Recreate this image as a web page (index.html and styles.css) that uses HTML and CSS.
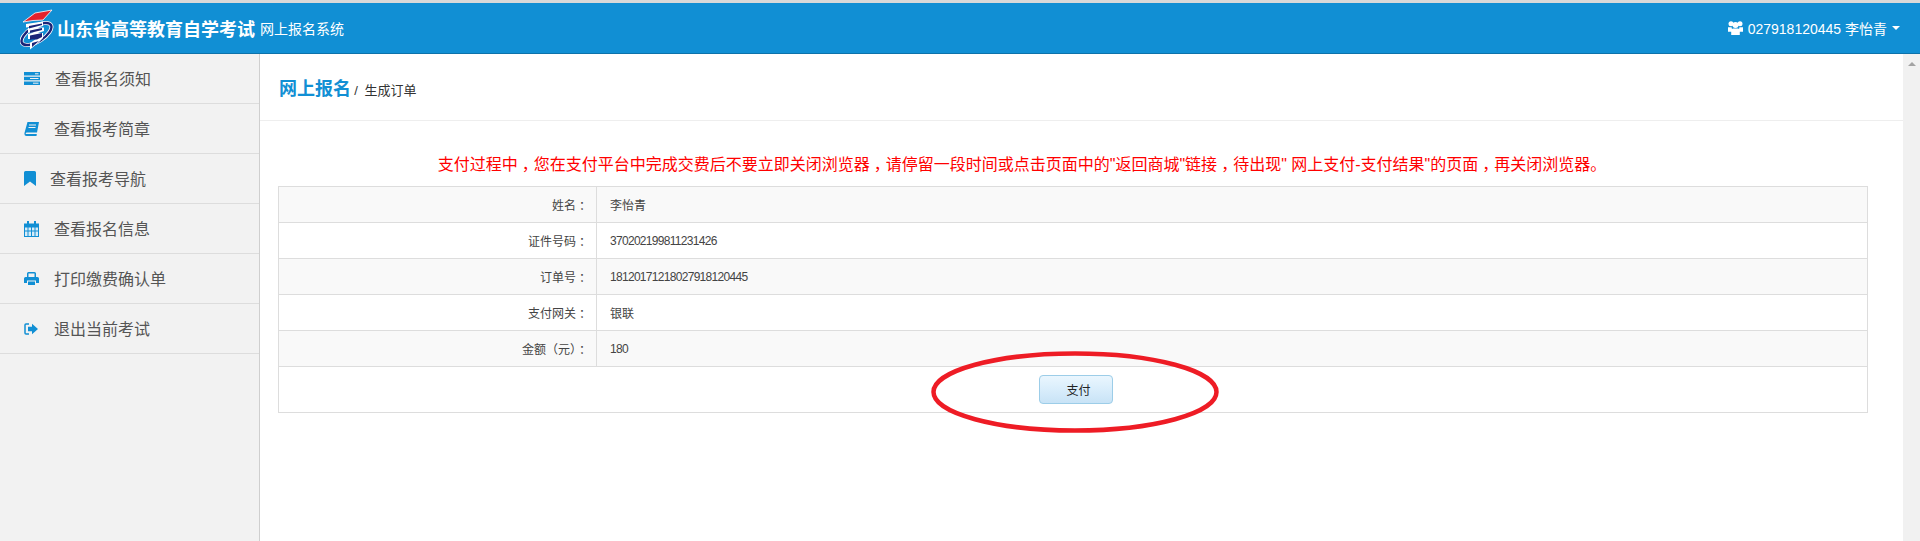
FILE: index.html
```html
<!DOCTYPE html>
<html lang="zh">
<head>
<meta charset="utf-8">
<title>网上报名</title>
<link rel="stylesheet" href="styles.css">
</head>
<body>
<div class="topline"></div>
<header class="header">
  <div class="brand">
    <svg class="logo" viewBox="20 8 34 42" width="34" height="42">
      <path d="M23 21 L35 12 L52 9 L43 19 L33 19.500 Z" fill="#e2202c" stroke="#fff" stroke-width=".8"/>
      <ellipse cx="36.500" cy="33" rx="17" ry="7.500" transform="rotate(-32 36.500 33)" fill="none" stroke="#fff" stroke-width="4"/>
      <ellipse cx="36.500" cy="33" rx="17" ry="7.500" transform="rotate(-32 36.500 33)" fill="none" stroke="#1b2478" stroke-width="2.400"/>
      <path d="M26 23 L43 20.500 V25 L38 26.500 H44 V30 L38 32 H43 V37 L38 42 L30 48.500 V42 L36 38 H28 V33 L34 31.500 H28 V27 L33 25.500 L26 26.500 Z" fill="#fff"/>
      <path d="M29 25 L42 22.500 V24 L29 27.500 Z M30 29.500 L42 27 V29 L30 32 Z M30 34.500 L42 32 V36 L37 38.500 H32 L30 39 Z M32 42 L39 40 L32 46 Z" fill="#1b2478"/>
    </svg>
    <span class="brand-title">山东省高等教育自学考试</span>
    <span class="brand-sub">网上报名系统</span>
  </div>
  <div class="user">
    <svg class="user-icon" viewBox="0 0 15 14" width="15" height="14"><circle cx="3" cy="2.800" r="2.500" fill="#fff"/><circle cx="12" cy="2.800" r="2.500" fill="#fff"/><circle cx="7.500" cy="4" r="3" fill="#fff"/><path d="M0 6.200h3.600l.9 4.600H0zM15 6.200h-3.600l-.9 4.600H15z" fill="#fff"/><path d="M3.200 14V9.600Q3.200 7.600 5.200 7.600h4.600q2 0 2 2V14z" fill="#fff"/></svg>
    <span class="user-text">027918120445 李怡青</span>
    <span class="caret"></span>
  </div>
</header>
<div class="body">
  <aside class="sidebar">
    <a class="nav-item">
      <svg class="nav-icon" viewBox="0 0 16 13" width="16" height="13"><path d="M0 0h16v3.600H0zM0 4.700h16v3.600H0zM0 9.400h16V13H0z" fill="#118fd4"/><path d="M11 1.800h3.500M6 6.500h8.500M9 11.200h5.500" stroke="#f2f2f2" stroke-width="1"/></svg>
      <span class="nav-label">查看报名须知</span>
    </a>
    <a class="nav-item">
      <svg class="nav-icon" viewBox="0 0 15 14" width="15" height="14"><path d="M3.500 0H15L13 10.500H3q-1.600 0-1.200 1.400h11L12.500 14H2.500Q-.2 14 .6 10.500z" fill="#118fd4"/><path d="M5 3h7M4.500 5.500h7" stroke="#f2f2f2" stroke-width="1"/></svg>
      <span class="nav-label nav-label-book">查看报考简章</span>
    </a>
    <a class="nav-item">
      <svg class="nav-icon" viewBox="0 0 12 15" width="12" height="15"><path d="M0 1.500Q0 0 1.500 0h9Q12 0 12 1.500V15L6 10.500 0 15z" fill="#118fd4"/></svg>
      <span class="nav-label nav-label-narrow">查看报考导航</span>
    </a>
    <a class="nav-item">
      <svg class="nav-icon" viewBox="0 0 15 16" width="15" height="16"><path d="M0 2.500h15V16H0z" fill="#118fd4"/><path d="M3 0h2v5H3zM10 0h2v5h-2z" fill="#118fd4"/><path d="M1 6.500h13v3H1zM1 10.500h13v4.500H1z" fill="#d7ecf8"/><path d="M4 6v9M7.500 6v9M11 6v9" stroke="#118fd4"/></svg>
      <span class="nav-label nav-label-wide">查看报名信息</span>
    </a>
    <a class="nav-item">
      <svg class="nav-icon" viewBox="0 0 15 13" width="15" height="13"><path d="M3 5V1.500Q3 0 4.500 0h6Q12 0 12 1.500V5H10.500V1.500h-6V5z" fill="#118fd4"/><path d="M1.500 5h12Q15 5 15 6.500V11h-3V8.500H3V11H0V6.500Q0 5 1.500 5zM4 9.500h7V13H4z" fill="#118fd4"/></svg>
      <span class="nav-label nav-label-wide">打印缴费确认单</span>
    </a>
    <a class="nav-item">
      <svg class="nav-icon" viewBox="0 0 14 12" width="14" height="12"><path d="M5 1H2Q1 1 1 2v8q0 1 1 1h3" fill="none" stroke="#118fd4" stroke-width="1.500"/><path d="M4 3.800h4V.8L14 6 8 11.200V8.200H4z" fill="#118fd4"/></svg>
      <span class="nav-label nav-label-exit">退出当前考试</span>
    </a>
  </aside>
  <main class="main">
    <div class="page-head">
      <span class="page-title">网上报名</span>
      <span class="page-sub">/ 生成订单</span>
    </div>
    <p class="notice">支付过程中<span class="comma">，</span>您在支付平台中完成交费后不要立即关闭浏览器<span class="comma">，</span>请停留一段时间或点击页面中的"返回商城"链接<span class="comma">，</span>待出现" 网上支付-支付结果"的页面<span class="comma">，</span>再关闭浏览器。</p>
    <table class="info">
      <tr class="odd"><th>姓名<span class="colon">：</span></th><td>李怡青</td></tr>
      <tr><th>证件号码<span class="colon">：</span></th><td class="num">370202199811231426</td></tr>
      <tr class="odd"><th>订单号<span class="colon">：</span></th><td class="num">18120171218027918120445</td></tr>
      <tr><th>支付网关<span class="colon">：</span></th><td>银联</td></tr>
      <tr class="odd"><th>金额（元）<span class="colon">：</span></th><td class="num">180</td></tr>
      <tr><td colspan="2" class="pay-cell"><span class="pay-wrap"><button class="pay-btn">支付</button>
        <svg class="ring" viewBox="0 0 290 84" width="290" height="84"><ellipse cx="145" cy="42" rx="141.500" ry="38.500" fill="none" stroke="#ee1c25" stroke-width="4.500"/></svg></span></td></tr>
    </table>
  </main>
  <div class="scrollbar"><span class="arrow-up"></span></div>
</div>
</body>
</html>
```
FILE: styles.css
```css
* { box-sizing: border-box; }
html, body { margin: 0; height: 100%; overflow: hidden; }
body { font-family: "Liberation Sans", "Noto Sans CJK SC", sans-serif; font-size: 12px; color: #333; background: #fff; display: flex; flex-direction: column; }
.topline { height: 3px; background: #d9d9d9; flex: none; }
.header { height: 51px; flex: none; background: #118fd4; border-bottom: 1px solid #0d72aa; display: flex; align-items: center; justify-content: space-between; padding: 0 20px 0 20px; color: #fff; }
.brand { display: flex; align-items: center; }
.logo { flex: none; margin: 3px 3px 0 0; }
.brand-title { font-size: 18px; font-weight: 700; margin-right: 5px; }
.brand-sub { font-size: 14px; }
.user { display: flex; align-items: center; font-size: 14px; }
.user-icon { margin-right: 5px; }
.caret { width: 0; height: 0; border: 4px solid transparent; border-top-color: #fff; border-bottom: 0; margin-left: 5px; }
.body { flex: 1; display: flex; min-height: 0; }
.sidebar { width: 260px; flex: none; background: #f2f2f2; border-right: 1px solid #cfcfcf; }
.nav-item { height: 50px; display: flex; align-items: center; padding-left: 24px; border-bottom: 1px solid #dddddd; font-size: 16px; color: #555; }
.nav-icon { flex: none; }
.nav-label { margin-left: 15px; margin-bottom: 2px; }
.nav-label-narrow { margin-left: 14px; }
.nav-label-exit { margin-left: 16px; }
.main { flex: 1; min-width: 0; }
.page-head { height: 67px; border-bottom: 1px solid #eeeeee; padding: 20px 0 0 19px; }
.page-title { font-size: 18px; font-weight: 700; color: #118fd4; }
.page-sub { font-size: 13px; color: #333; word-spacing: 3px; }
.notice { margin: 34px 0 0; padding-right: 119px; height: 19px; line-height: 19px; text-align: center; color: #ff0000; font-size: 16px; }
.comma { font-feature-settings: "halt"; padding: 0 4px; }
.colon { font-feature-settings: "halt"; padding: 0 3px; }
.info { margin: 12px 0 0 18px; width: 1590px; border-collapse: collapse; font-size: 12px; }
.info th, .info td { border: 1px solid #dddddd; height: 36px; padding: 0 13px; color: #444; font-weight: 400; }
.info th { width: 318px; text-align: right; padding: 0 8px 0 0; }
.info .num { letter-spacing: -.7px; }
.odd th, .odd td { background: #f9f9f9; }
.info .pay-cell { height: 46px; text-align: center; padding: 0 0 0 6px; }
.pay-wrap { position: relative; display: inline-block; vertical-align: middle; }
.pay-btn { display: block; width: 74px; height: 29px; padding: 0 0 0 5px; border: 1px solid #9ccde8; border-radius: 4px; background: linear-gradient(#eaf6fe, #d9edfb 50%, #c8e3f6); font: 12px "Liberation Sans", "Noto Sans CJK SC", sans-serif; color: #222; }
.ring { position: absolute; left: -109px; top: -25px; }
.scrollbar { width: 17px; flex: none; background: #f1f1f1; display: flex; justify-content: center; padding-top: 8px; }
.arrow-up { width: 0; height: 0; border: 4px solid transparent; border-bottom-color: #a3a3a3; border-top: 0; }
```
